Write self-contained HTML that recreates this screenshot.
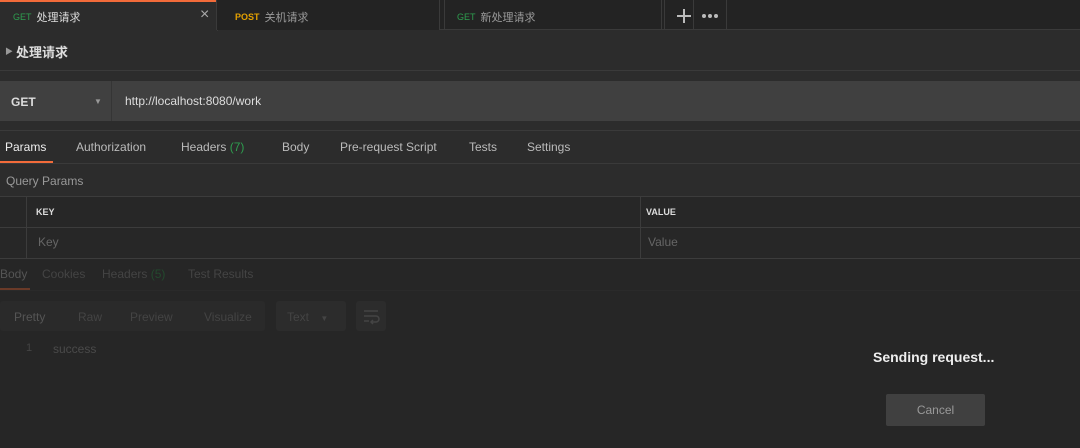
<!DOCTYPE html><html><head><style>
*{margin:0;padding:0;box-sizing:border-box}
body{width:1080px;height:448px;background:#2c2c2c;font-family:"Liberation Sans","Noto Sans CJK SC",sans-serif;position:relative;overflow:hidden;color:#ddd}
.a{position:absolute;white-space:nowrap}
.t{line-height:14px}
.t b{font-size:9px;font-weight:normal;margin-right:5px;vertical-align:1px}
</style></head><body>
<div class="a" style="left:0;top:0;width:1080px;height:30px;background:#232323;border-bottom:1px solid #3a3a3a"></div>
<div class="a" style="left:0;top:0;width:218px;height:31px;background:#2c2c2c;border-top:2px solid #f26b3a;border-right:1px solid #3a3a3a"></div>
<div class="a t" style="left:13px;top:10px;font-size:11px;color:#ddd"><b style="color:#2e9e4f">GET</b>处理请求</div>
<div class="a" style="left:200px;top:6px;font-size:16px;color:#aaa">×</div>
<div class="a" style="left:216px;top:0;width:224px;height:30px;border:1px solid #3a3a3a;border-top:none;border-bottom:none;background:#232323"></div>
<div class="a t" style="left:235px;top:10px;font-size:11px;color:#999"><b style="color:#e5a100;font-weight:bold">POST</b>关机请求</div>
<div class="a" style="left:444px;top:0;width:218px;height:30px;border:1px solid #3a3a3a;border-top:none;border-bottom:none"></div>
<div class="a t" style="left:457px;top:10px;font-size:11px;color:#999"><b style="color:#2e9e4f">GET</b>新处理请求</div>
<div class="a" style="left:664px;top:0;width:63px;height:30px;border:1px solid #3a3a3a;border-top:none;border-bottom:none"></div>
<div class="a" style="left:693px;top:0;width:1px;height:30px;background:#3a3a3a"></div>
<div class="a" style="left:677px;top:9px;width:14px;height:2px;background:#bbb;top:15px"></div>
<div class="a" style="left:683px;top:9px;width:2px;height:14px;background:#bbb"></div>
<div class="a" style="left:702px;top:14px;width:4px;height:4px;border-radius:2px;background:#bbb;box-shadow:6px 0 #bbb,12px 0 #bbb"></div>
<div class="a" style="left:5px;top:46px;font-size:8px;color:#999">▶</div>
<div class="a" style="left:16px;top:42px;font-size:13px;font-weight:bold;color:#ddd">处理请求</div>
<div class="a" style="left:0;top:70px;width:1080px;height:1px;background:#3a3a3a"></div>
<div class="a" style="left:0;top:81px;width:1080px;height:40px;background:#404040"></div>
<div class="a" style="left:111px;top:81px;width:1px;height:40px;background:#353535"></div>
<div class="a" style="left:11px;top:95px;font-size:12px;font-weight:bold;color:#ddd">GET</div>
<div class="a" style="left:94px;top:97px;font-size:8px;color:#999">▼</div>
<div class="a" style="left:125px;top:94px;font-size:12px;color:#ddd">http://localhost:8080/work</div>
<div class="a" style="left:0;top:130px;width:1080px;height:1px;background:#3a3a3a"></div>
<div class="a" style="left:0;top:163px;width:1080px;height:1px;background:#3a3a3a"></div>
<div class="a" style="left:0;top:161px;width:53px;height:2px;background:#f26b3a"></div>
<div class="a" style="top:140px;left:5px;font-size:12px;color:#eee">Params</div>
<div class="a" style="top:140px;left:76px;font-size:12px;color:#bbb">Authorization</div>
<div class="a" style="top:140px;left:181px;font-size:12px;color:#bbb">Headers <span style="color:#2e9e4f">(7)</span></div>
<div class="a" style="top:140px;left:282px;font-size:12px;color:#bbb">Body</div>
<div class="a" style="top:140px;left:340px;font-size:12px;color:#bbb">Pre-request Script</div>
<div class="a" style="top:140px;left:469px;font-size:12px;color:#bbb">Tests</div>
<div class="a" style="top:140px;left:527px;font-size:12px;color:#bbb">Settings</div>
<div class="a" style="top:174px;left:6px;font-size:12px;color:#999">Query Params</div>
<div class="a" style="left:0;top:196px;width:1080px;height:63px;background:#272727;border-top:1px solid #3c3c3c;border-bottom:1px solid #3c3c3c"></div>
<div class="a" style="left:0;top:227px;width:1080px;height:1px;background:#3c3c3c"></div>
<div class="a" style="left:26px;top:196px;width:1px;height:63px;background:#3c3c3c"></div>
<div class="a" style="left:640px;top:196px;width:1px;height:63px;background:#3c3c3c"></div>
<div class="a" style="left:36px;top:207px;font-size:9px;font-weight:bold;color:#ddd">KEY</div>
<div class="a" style="left:646px;top:207px;font-size:9px;font-weight:bold;color:#ddd">VALUE</div>
<div class="a" style="left:38px;top:235px;font-size:12px;color:#666">Key</div>
<div class="a" style="left:648px;top:235px;font-size:12px;color:#666">Value</div>
<div class="a" style="left:0;top:259px;width:1080px;height:189px;background:#262626"></div>
<div class="a" style="left:0;top:290px;width:1080px;height:1px;background:#2a2a2a"></div>
<div class="a" style="left:0;top:288px;width:30px;height:2px;background:#6a3a28"></div>
<div class="a" style="top:267px;left:0;font-size:12px;color:#555">Body</div>
<div class="a" style="top:267px;left:42px;font-size:12px;color:#444">Cookies</div>
<div class="a" style="top:267px;left:102px;font-size:12px;color:#444">Headers <span style="color:#234a2e">(5)</span></div>
<div class="a" style="top:267px;left:188px;font-size:12px;color:#444">Test Results</div>
<div class="a" style="left:0;top:301px;width:265px;height:30px;background:#2a2a2a;border-radius:3px"></div>
<div class="a" style="left:276px;top:301px;width:70px;height:30px;background:#2c2c2c;border-radius:3px"></div>
<div class="a" style="left:356px;top:301px;width:30px;height:30px;background:#2c2c2c;border-radius:3px"></div>
<svg class="a" style="left:361px;top:306px" width="20" height="20" viewBox="0 0 20 20" fill="none" stroke="#444" stroke-width="1.5"><path d="M3 5h14M3 10h12a3 3 0 0 1 0 6h-4M3 15h5M12 14l-2 2 2 2"/></svg>
<div class="a" style="top:310px;left:14px;font-size:12px;color:#555">Pretty</div>
<div class="a" style="top:310px;left:78px;font-size:12px;color:#444">Raw</div>
<div class="a" style="top:310px;left:130px;font-size:12px;color:#444">Preview</div>
<div class="a" style="top:310px;left:204px;font-size:12px;color:#444">Visualize</div>
<div class="a" style="top:310px;left:287px;font-size:12px;color:#444">Text <span style="font-size:8px;margin-left:8px">▼</span></div>
<div class="a" style="top:342px;left:26px;font-size:11px;color:#444">1</div>
<div class="a" style="top:342px;left:53px;font-size:12px;color:#4a4a4a">success</div>
<div class="a" style="top:349px;left:873px;font-size:14px;font-weight:bold;color:#eee">Sending request...</div>
<div class="a" style="left:886px;top:394px;width:99px;height:32px;background:#404040;border-radius:2px;color:#999;font-size:12px;text-align:center;line-height:32px">Cancel</div>
</body></html>
